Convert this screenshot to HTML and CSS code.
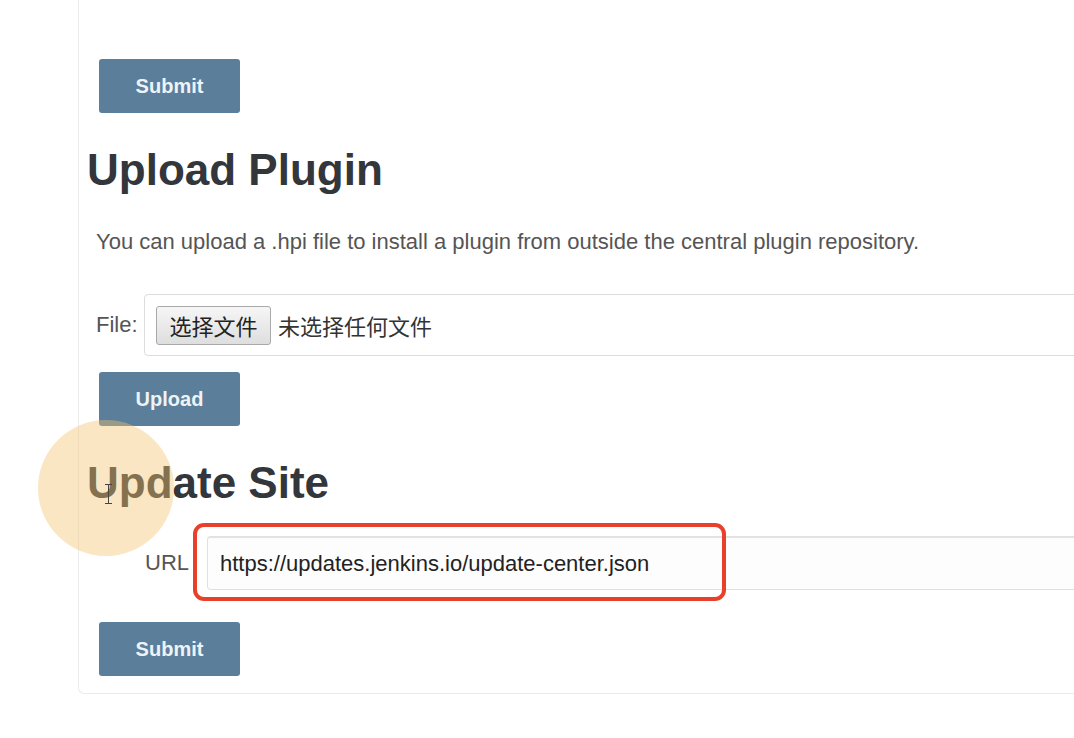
FILE: index.html
```html
<!DOCTYPE html>
<html>
<head>
<meta charset="utf-8">
<link rel="stylesheet" href="styles.css">
</head>
<body>
<div class="panel">
  <button class="btn btn-first">Submit</button>

  <h1 class="title title-upload">Upload Plugin</h1>
  <p class="desc">You can upload a .hpi file to install a plugin from outside the central plugin repository.</p>
  <div class="row row-file">
    <span class="label">File:</span>
    <div class="field field-file">
      <span class="file-btn">选择文件</span>
      <span class="file-none">未选择任何文件</span>
    </div>
  </div>
  <button class="btn btn-upload">Upload</button>

  <h1 class="title title-update">Update Site</h1>
  <div class="row row-url">
    <span class="label label-url">URL</span>
    <div class="field field-url">https://updates.jenkins.io/update-center.json</div>
    <div class="highlight"></div>
  </div>
  <button class="btn btn-last">Submit</button>

  <div class="cursor-halo"></div>
  <div class="ibeam"></div>
</div>
</body>
</html>
```

FILE: styles.css
```css
html, body {
  margin: 0;
  padding: 0;
  background: #ffffff;
  overflow: hidden;
  font-family: "Liberation Sans", Arial, sans-serif;
}

.panel {
  position: relative;
  margin-left: 78px;
  width: 1100px;
  padding-top: 59px;
  padding-bottom: 17px;
  border-left: 1px solid #ececec;
  border-bottom: 1px solid #ececec;
  border-bottom-left-radius: 6px;
  display: flex;
  flex-direction: column;
  align-items: flex-start;
}

.btn {
  margin-left: 20px;
  width: 141px;
  height: 54px;
  background: #5b7f9a;
  border: none;
  border-radius: 3px;
  color: #eef3f7;
  font-family: "Liberation Sans", Arial, sans-serif;
  font-weight: bold;
  font-size: 20px;
  padding: 0;
}

.title {
  margin: 32px 0 0 8px;
  font-size: 44px;
  line-height: 50px;
  font-weight: bold;
  color: #33363b;
}

.title-update {
  margin-top: 32px;
}

.desc {
  margin: 35px 0 0 17px;
  font-size: 22px;
  line-height: 24px;
  color: #555555;
}

.row {
  position: relative;
  display: flex;
  align-items: center;
  align-self: stretch;
}

.row-file {
  margin-top: 40px;
  margin-left: 17px;
}

.label {
  font-size: 22px;
  color: #555555;
  width: 48px;
}

.label-url {
  margin-left: 66px;
  width: 62px;
}

.field {
  flex: 1;
  box-sizing: border-box;
  border: 1px solid #dcdcdc;
  border-radius: 4px;
  background: #fff;
  display: flex;
  align-items: center;
}

.field-file {
  height: 62px;
  padding-left: 11px;
}

.file-btn {
  box-sizing: border-box;
  width: 115px;
  height: 39px;
  display: flex;
  align-items: center;
  justify-content: center;
  border: 1px solid #a9a9a9;
  border-radius: 3px;
  background: linear-gradient(#f6f6f6, #dedede);
  font-family: "Liberation Sans", "Noto Sans CJK SC", sans-serif;
  font-size: 22px;
  color: #222;
}

.file-none {
  margin-left: 7px;
  font-family: "Liberation Sans", "Noto Sans CJK SC", sans-serif;
  font-size: 22px;
  color: #333;
}

.btn-upload {
  margin-top: 16px;
}

.row-url {
  margin-top: 28px;
}

.field-url {
  height: 54px;
  padding-left: 12px;
  border-color: #e0e0e0;
  border-top: 2px solid #e2e2e2;
  background: #fdfdfd;
  font-size: 22px;
  color: #222;
}

.highlight {
  position: absolute;
  left: 114px;
  top: -13px;
  width: 533px;
  height: 78px;
  box-sizing: border-box;
  border: 4px solid #e9402b;
  border-radius: 11px;
  pointer-events: none;
}

.btn-last {
  margin-top: 32px;
}

.cursor-halo {
  position: absolute;
  left: -41px;
  top: 420px;
  width: 136px;
  height: 136px;
  border-radius: 50%;
  background: rgba(242, 196, 110, 0.42);
  pointer-events: none;
}

.ibeam {
  position: absolute;
  left: 29px;
  top: 484px;
  width: 1px;
  height: 20px;
  background: #444;
}
.ibeam::before,
.ibeam::after {
  content: "";
  position: absolute;
  left: -3px;
  width: 7px;
  height: 1px;
  background: #444;
}
.ibeam::before { top: 0; }
.ibeam::after { bottom: 0; }
```
